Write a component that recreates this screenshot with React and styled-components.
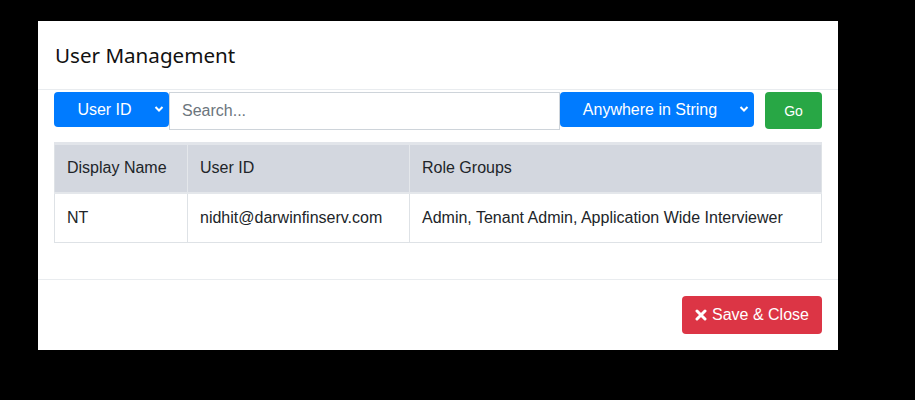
import React from "react";
import styled, { createGlobalStyle } from "styled-components";

const GlobalStyle = createGlobalStyle`
  html, body {
    margin: 0;
    padding: 0;
    background: #000;
  }
  body {
    font-family: "Liberation Sans", Arial, sans-serif;
    color: #212529;
  }
`;

const Backdrop = styled.div`
  width: 915px;
  height: 400px;
  background: #000;
  padding: 21px 0 0 38px;
  box-sizing: border-box;
`;

const Modal = styled.div`
  width: 800px;
  height: 329px;
  background: #fff;
  display: flex;
  flex-direction: column;
`;

const Header = styled.div`
  padding: 16px 17px 16px;
  border-bottom: 1px solid #e9ecef;
`;

const Title = styled.h5`
  margin: 0;
  font-family: "Noto Sans", "Open Sans", sans-serif;
  font-weight: 400;
  font-size: 20.6px;
  line-height: 36px;
  color: #111;
`;

const Body = styled.div`
  padding: 2px 16px 36px;
  flex: 1;
`;

const SearchRow = styled.div`
  display: flex;
  align-items: flex-start;
  height: 38px;
`;

const Dropdown = styled.div`
  display: flex;
  align-items: center;
  justify-content: center;
  position: relative;
  width: ${(p) => p.width}px;
  height: 35px;
  box-sizing: border-box;
  padding-right: 14px;
  background: #007bff;
  color: #fff;
  border-radius: 4px;
  font-size: 16px;
  flex-shrink: 0;

  svg {
    position: absolute;
    right: 5px;
    top: 13px;
  }
`;

const SearchInput = styled.input`
  width: 391px;
  height: 38px;
  box-sizing: border-box;
  border: 1px solid #ced4da;
  padding: 0 12px;
  font-family: "Liberation Sans", Arial, sans-serif;
  font-size: 16px;
  color: #495057;
  outline: none;

  &::placeholder {
    color: #6c757d;
  }
`;

const GoButton = styled.button`
  margin-left: 11px;
  width: 57px;
  height: 37px;
  border: none;
  border-radius: 4px;
  background: #28a745;
  color: #fff;
  font-family: "Liberation Sans", Arial, sans-serif;
  font-size: 14px;
`;

const Table = styled.table`
  margin-top: 12px;
  width: 768px;
  border-collapse: collapse;
  border: 1px solid #dee2e6;
  font-size: 16px;
`;

const HeadCell = styled.th`
  background: #d3d7df;
  border-top: 3px solid #e2e5ea;
  border-bottom: 2px solid #e4e7eb;
  border-left: 1px solid #e4e7eb;
  text-align: left;
  font-weight: 400;
  padding: 12px;
  height: 49px;
  box-sizing: border-box;
  width: ${(p) => p.width}px;
  &:first-child {
    border-left: none;
  }
`;

const Cell = styled.td`
  border-left: 1px solid #dee2e6;
  padding: 12px;
  height: 50px;
  box-sizing: border-box;
  &:first-child {
    border-left: none;
  }
`;

const Footer = styled.div`
  border-top: 1px solid #e9ecef;
  padding: 16px;
  display: flex;
  justify-content: flex-end;
`;

const SaveButton = styled.button`
  display: flex;
  align-items: center;
  gap: 5px;
  width: 140px;
  height: 38px;
  justify-content: center;
  border: none;
  border-radius: 4px;
  background: #dc3545;
  color: #fff;
  font-family: "Liberation Sans", Arial, sans-serif;
  font-size: 16px;
`;

const Chevron = () => (
  <svg width="10" height="8" viewBox="0 0 10 8">
    <path d="M1.5 2 L5 5.5 L8.5 2" fill="none" stroke="#fff" strokeWidth="2" />
  </svg>
);

const CloseIcon = () => (
  <svg width="12" height="12" viewBox="0 0 12 12">
    <path d="M2 2 L10 10 M10 2 L2 10" stroke="#fff" strokeWidth="3" strokeLinecap="round" />
  </svg>
);

const users = [
  {
    name: "NT",
    id: "nidhit@darwinfinserv.com",
    roles: "Admin, Tenant Admin, Application Wide Interviewer",
  },
];

export default function App() {
  return (
    <Backdrop>
      <GlobalStyle />
      <Modal>
        <Header>
          <Title>User Management</Title>
        </Header>
        <Body>
          <SearchRow>
            <Dropdown width={115}>
              User ID
              <Chevron />
            </Dropdown>
            <SearchInput placeholder="Search..." />
            <Dropdown width={194}>
              Anywhere in String
              <Chevron />
            </Dropdown>
            <GoButton>Go</GoButton>
          </SearchRow>
          <Table>
            <thead>
              <tr>
                <HeadCell width={133}>Display Name</HeadCell>
                <HeadCell width={222}>User ID</HeadCell>
                <HeadCell>Role Groups</HeadCell>
              </tr>
            </thead>
            <tbody>
              {users.map((u) => (
                <tr key={u.id}>
                  <Cell>{u.name}</Cell>
                  <Cell>{u.id}</Cell>
                  <Cell>{u.roles}</Cell>
                </tr>
              ))}
            </tbody>
          </Table>
        </Body>
        <Footer>
          <SaveButton>
            <CloseIcon />
            Save &amp; Close
          </SaveButton>
        </Footer>
      </Modal>
    </Backdrop>
  );
}
